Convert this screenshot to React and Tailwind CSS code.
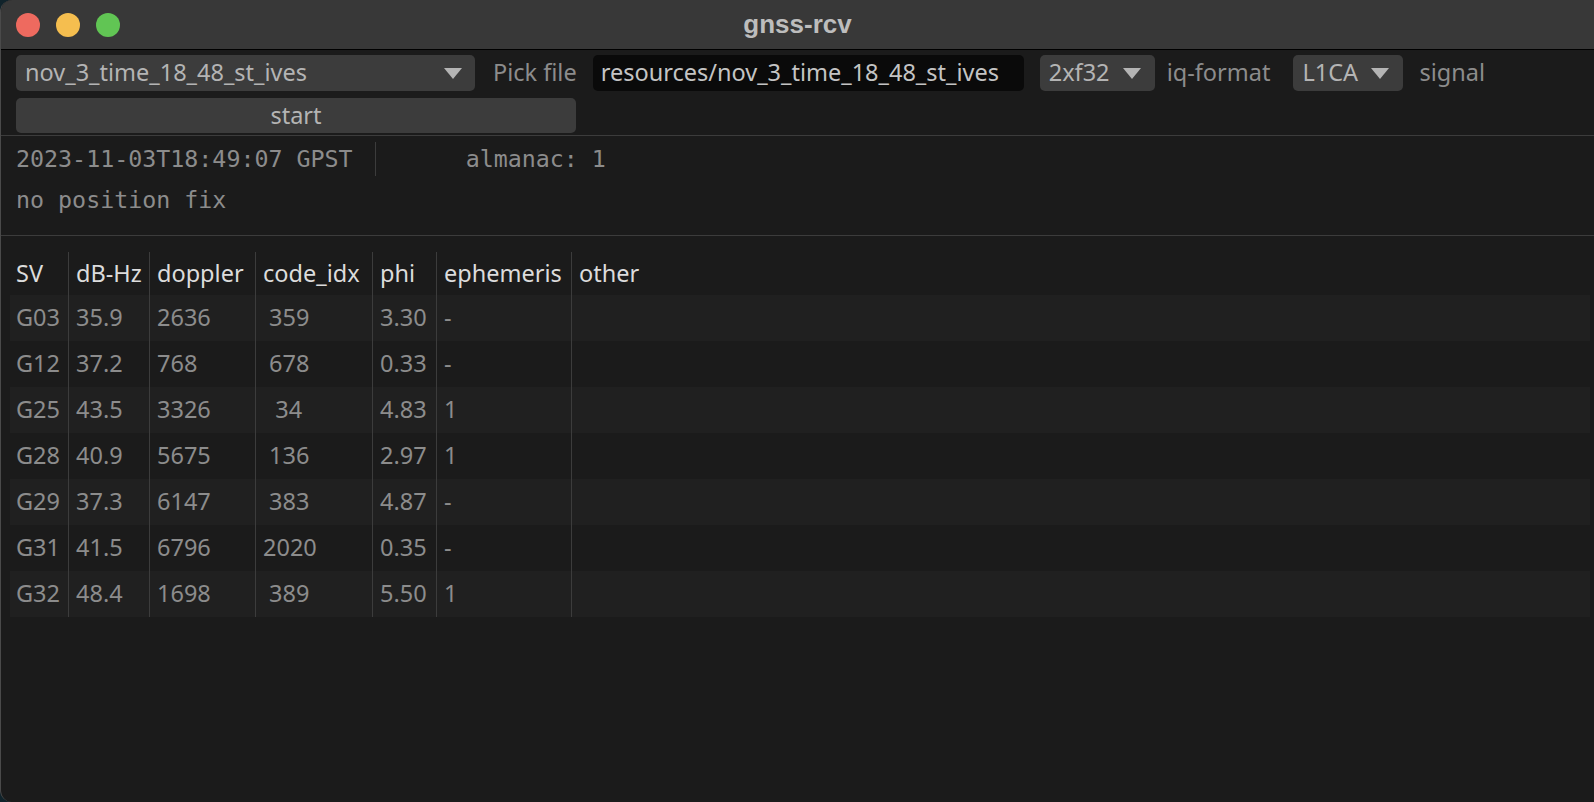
import React from 'react';

const rows = [
  ['G03', '35.9', '2636', ' 359', '3.30', '-'],
  ['G12', '37.2', '768', ' 678', '0.33', '-'],
  ['G25', '43.5', '3326', '  34', '4.83', '1'],
  ['G28', '40.9', '5675', ' 136', '2.97', '1'],
  ['G29', '37.3', '6147', ' 383', '4.87', '-'],
  ['G31', '41.5', '6796', '2020', '0.35', '-'],
  ['G32', '48.4', '1698', ' 389', '5.50', '1'],
];

const headers = ['SV', 'dB-Hz', 'doppler', 'code_idx', 'phi', 'ephemeris', 'other'];

const sans = { fontFamily: '"Noto Sans", "Open Sans", sans-serif' };
const mono = { fontFamily: '"DejaVu Sans Mono", "Liberation Mono", monospace' };

function Triangle() {
  return (
    <svg width="20" height="13" viewBox="0 0 20 13" className="shrink-0">
      <path d="M1 1 H19 L10 12 Z" fill="#b4b4b4" />
    </svg>
  );
}

function Combo({ label, className }) {
  return (
    <div className={`h-[36px] rounded-[5px] bg-[#3c3c3c] flex items-center text-[#b4b4b4] ${className}`}>
      <span>{label}</span>
      <Triangle />
    </div>
  );
}

function Cell({ children, first, head }) {
  return (
    <div
      className={`flex items-center whitespace-pre ${first ? 'pl-[6px]' : 'pl-[7px] border-l border-[#3c3c3c]'} ${head ? 'text-[#dcdcdc]' : 'text-[#8c8c8c]'}`}
    >
      {children}
    </div>
  );
}

export default function App() {
  return (
    <div className="w-[1594px] h-[802px] bg-[#10232b] overflow-hidden">
      <div className="h-full flex flex-col bg-[#1b1b1b] rounded-l-[12px] border-l border-[#4a4a4a] overflow-hidden text-[23.5px]" style={sans}>
        {/* title bar */}
        <div className="h-[50px] shrink-0 bg-[#383838] border-b border-black grid grid-cols-[1fr_auto_1fr] items-center">
          <div className="flex gap-4 pl-[15px]">
            <div className="w-6 h-6 rounded-full bg-[#ee6a5f]" />
            <div className="w-6 h-6 rounded-full bg-[#f5be4f]" />
            <div className="w-6 h-6 rounded-full bg-[#61c554]" />
          </div>
          <div className="text-[26px] font-bold text-[#bdbdbd] leading-none pb-[2px]" style={{ fontFamily: '"Liberation Sans", Arial, sans-serif' }}>gnss-rcv</div>
          <div />
        </div>

        {/* top panel */}
        <div className="pl-[15px] pt-[5px]">
          <div className="flex items-center">
            <Combo label="nov_3_time_18_48_st_ives" className="w-[459px] pl-[9px] pr-[12px] justify-between" />
            <span className="ml-[18px] text-[#8c8c8c]">Pick file</span>
            <div className="ml-[16px] w-[431px] h-[36px] rounded-[5px] bg-[#0a0a0a] flex items-center pl-[8px] text-[#c4c4c4] whitespace-nowrap overflow-hidden">
              resources/nov_3_time_18_48_st_ives
            </div>
            <Combo label="2xf32" className="ml-[16px] w-[115px] pl-[9px] gap-[12px]" />
            <span className="ml-[12px] text-[#8c8c8c]">iq-format</span>
            <Combo label="L1CA" className="ml-[23px] w-[110px] pl-[9px] gap-[12px]" />
            <span className="ml-[16px] text-[#8c8c8c]">signal</span>
          </div>
          <div className="mt-[7px] w-[560px] h-[35px] rounded-[5px] bg-[#3c3c3c] flex items-center justify-center text-[#b4b4b4]">
            start
          </div>
        </div>
        <div className="h-px bg-[#3c3c3c] mt-[2px]" />

        {/* status */}
        <div className="pl-[15px] text-[#8c8c8c] text-[23.3px]" style={mono}>
          <div className="mt-[6px] h-[34px] flex items-center">
            <span>2023-11-03T18:49:07 GPST</span>
            <div className="ml-[22px] w-px h-[34px] bg-[#3c3c3c]" />
            <span className="ml-[90px]">almanac: 1</span>
          </div>
          <div className="mt-[10px] leading-[28px]">no position fix</div>
        </div>
        <div className="h-px bg-[#3c3c3c] mt-[21px]" />

        {/* satellites table */}
        <div className="pl-[9px] pr-[4px] mt-[16px]">
          <div className="grid grid-cols-[58px_81px_106px_117px_64px_135px_1fr] h-[43px]">
            {headers.map((h, i) => (
              <Cell key={h} first={i === 0} head>{h}</Cell>
            ))}
          </div>
          {rows.map((r, idx) => (
            <div
              key={r[0]}
              className={`grid grid-cols-[58px_81px_106px_117px_64px_135px_1fr] h-[46px] ${idx % 2 === 0 ? 'bg-[#202020]' : ''}`}
            >
              {r.map((v, i) => (
                <Cell key={i} first={i === 0}>{v}</Cell>
              ))}
              <Cell />
            </div>
          ))}
        </div>
      </div>
    </div>
  );
}
